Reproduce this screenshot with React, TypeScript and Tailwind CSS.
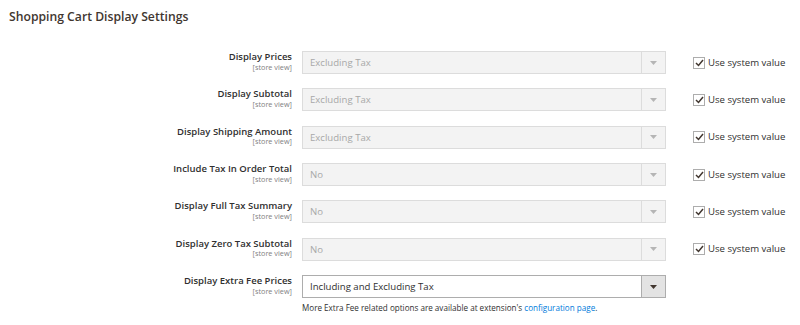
import React from "react";

const rows = [
  { label: "Display Prices", value: "Excluding Tax", disabled: true },
  { label: "Display Subtotal", value: "Excluding Tax", disabled: true },
  { label: "Display Shipping Amount", value: "Excluding Tax", disabled: true },
  { label: "Include Tax In Order Total", value: "No", disabled: true },
  { label: "Display Full Tax Summary", value: "No", disabled: true },
  { label: "Display Zero Tax Subtotal", value: "No", disabled: true },
  { label: "Display Extra Fee Prices", value: "Including and Excluding Tax", disabled: false },
];

function Arrow({ dark }: { dark: boolean }) {
  return (
    <svg width="7" height="4" viewBox="0 0 7 4">
      <path d="M0 0 H7 L3.5 4 Z" fill={dark ? "#41362f" : "#b5b5b5"} />
    </svg>
  );
}

export default function App() {
  return (
    <div
      className="w-[800px] h-[325px] bg-white overflow-hidden relative"
      style={{ fontFamily: '"Open Sans", "Noto Sans", sans-serif' }}
    >
      <div className="pl-[9px] pt-[8px] text-[12.2px] font-semibold text-[#41362f] leading-[17px]">
        Shopping Cart Display Settings
      </div>
      <div className="mt-[26px] flex flex-col">
        {rows.map((r, i) => (
          <div key={i} className="flex items-start h-[37.35px]">
            <div className="w-[292px] text-right flex flex-col items-end">
              <div className="text-[9.5px] font-semibold text-[#303030] leading-[12px]">
                {r.label}
              </div>
              <div className="text-[7.3px] text-[#808080] leading-[9px] mt-[-0.5px]">[store view]</div>
            </div>
            <div className="ml-[10px] flex flex-col">
              <div
                className={
                  r.disabled
                    ? "w-[364px] h-[23px] flex border border-[#dcdcdc] bg-[#f3f3f3]"
                    : "w-[364px] h-[23px] flex border border-[#adadad] bg-white"
                }
              >
                <div
                  className={
                    r.disabled
                      ? "flex-1 pl-[7px] text-[9.6px] leading-[21px] text-[#a8a8a8]"
                      : "flex-1 pl-[7px] text-[9.6px] leading-[21px] text-[#303030]"
                  }
                >
                  {r.value}
                </div>
                <div
                  className={
                    r.disabled
                      ? "w-[24px] border-l border-[#dcdcdc] flex items-center justify-center"
                      : "w-[24px] border-l border-[#adadad] bg-[#e3e3e3] flex items-center justify-center"
                  }
                >
                  <Arrow dark={!r.disabled} />
                </div>
              </div>
              {!r.disabled && (
                <div className="mt-[4px] text-[8.1px] leading-[11px] text-[#303030] whitespace-nowrap">
                  More Extra Fee related options are available at extension's{" "}
                  <span className="text-[#007bdb]">configuration page</span>.
                </div>
              )}
            </div>
            {r.disabled && (
              <div className="ml-[27px] h-[23px] flex items-center">
                <div className="w-[12px] h-[12px] border border-[#adadad] bg-white flex items-center justify-center">
                  <svg width="9" height="8" viewBox="0 0 9 8">
                    <path d="M1 4 L3.5 6.5 L8 1" stroke="#41362f" strokeWidth="1.5" fill="none" />
                  </svg>
                </div>
                <span className="ml-[3px] text-[9.6px] text-[#303030] leading-[14px]">Use system value</span>
              </div>
            )}
          </div>
        ))}
      </div>
    </div>
  );
}
